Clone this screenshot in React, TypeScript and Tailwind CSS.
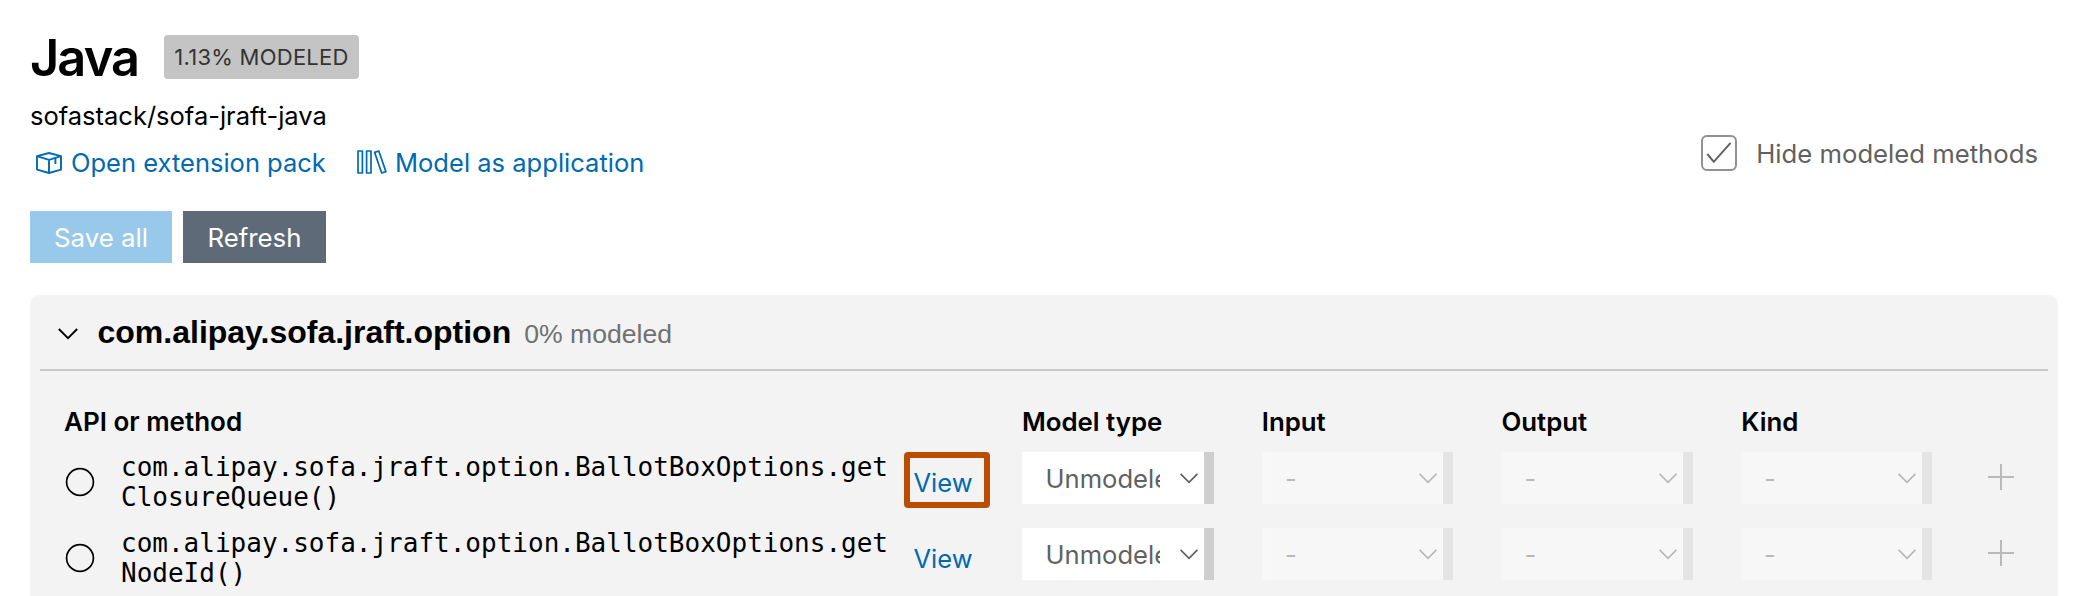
import React from "react";

const methods = [
  { name: ["com.alipay.sofa.jraft.option.BallotBoxOptions.get", "ClosureQueue()"], highlighted: true },
  { name: ["com.alipay.sofa.jraft.option.BallotBoxOptions.get", "NodeId()"], highlighted: false },
];

function ChevronDown({ className }: { className: string }) {
  return (
    <svg viewBox="0 0 18 11" fill="none" stroke="currentColor" className={className}>
      <path d="M0.6 0.9 L9 9.4 L17.4 0.9" strokeWidth="1.7" />
    </svg>
  );
}

function PackageIcon({ className }: { className: string }) {
  return (
    <svg viewBox="0 0 26 22" fill="none" stroke="currentColor" strokeWidth="1.9" strokeLinejoin="round" className={className}>
      <path d="M1 4.2 L13 1 L25 4.2 V17.6 L13 21 L1 17.6 Z" />
      <path d="M1 4.2 L13 7.8 L25 4.2 M13 7.8 V21" />
      <path d="M19.4 6.2 V12" />
    </svg>
  );
}

function LibraryIcon({ className }: { className: string }) {
  return (
    <svg viewBox="0 0 30 24" fill="none" stroke="currentColor" strokeWidth="1.7" strokeLinejoin="round" className={className}>
      <path d="M1 1 H5.4 V23 H1 Z" />
      <path d="M9.6 1 H14 V23 H9.6 Z" />
      <path d="M17.6 2.4 L21.8 1 L28.9 21.6 L24.7 23 Z" />
    </svg>
  );
}

function Dropdown({ value, disabled }: { value: string; disabled?: boolean }) {
  return (
    <div className={`flex h-[52px] w-[191.75px] shrink-0 items-center text-[#616161] ${disabled ? "opacity-40" : ""}`}>
      <div className="flex h-full min-w-0 flex-1 items-center bg-white pr-[6px] pl-[23.5px]">
        <span className="mt-[2px] w-[114.5px] overflow-hidden text-[25.6px] whitespace-nowrap">{value}</span>
        <ChevronDown className="ml-auto h-[11px] w-[18px] shrink-0" />
      </div>
      <div className="h-full w-[10px] shrink-0 bg-[#cecece]" />
    </div>
  );
}

function MethodRow({ name, highlighted }: { name: string[]; highlighted: boolean }) {
  return (
    <div className="flex h-[76px] items-start">
      <svg viewBox="0 0 30 30" className="mt-[15px] ml-[0.5px] h-[30px] w-[30px] shrink-0">
        <circle cx="15" cy="15" r="13.4" fill="none" stroke="#000" strokeWidth="1.7" />
      </svg>
      <div className="ml-[26.5px] w-[783px] shrink-0 font-['DejaVu_Sans_Mono',monospace] text-[26px] leading-[30px] text-black">
        {name.map((part) => (
          <div key={part}>{part}</div>
        ))}
      </div>
      <div
        className={`flex h-[56px] w-[86px] shrink-0 items-center rounded-[4px] border-[6px] pt-[6px] pl-[3.5px] text-[#006ab1] ${
          highlighted ? "border-[#bc4c00]" : "border-transparent"
        }`}
      >
        <span>View</span>
      </div>
      <div className="ml-[32px] flex gap-[47.75px]">
        <Dropdown value="Unmodeled" />
        <Dropdown value="-" disabled />
        <Dropdown value="-" disabled />
        <Dropdown value="-" disabled />
      </div>
      <svg viewBox="0 0 28 28" className="mt-[11px] ml-[55px] h-[28px] w-[28px] shrink-0">
        <path d="M14 1 V27 M1 14 H27" stroke="#b9b9b9" strokeWidth="2" />
      </svg>
    </div>
  );
}

export default function App() {
  return (
    <div className="h-[596px] w-[2088px] overflow-hidden bg-white px-[30px] font-['Inter',sans-serif] text-[25.5px] leading-[32px] text-black">
      <header className="flex h-[295px] justify-between">
        <div>
          <div className="flex items-center pt-[35px]">
            <h1 className="w-[134px] pt-[2px] text-[50.5px] leading-[42px] font-semibold tracking-[-1.9px]">Java</h1>
            <span className="flex h-[44px] w-[195px] items-center justify-center rounded-[4px] bg-[#c4c4c4] text-[22px] tracking-[0.25px] whitespace-nowrap text-[#333333]">
              1.13% MODELED
            </span>
          </div>
          <p className="mt-[21px] h-[32px]">sofastack/sofa-jraft-java</p>
          <nav className="mt-[15px] flex h-[32px] items-center text-[#006ab1]">
            <PackageIcon className="mr-[9px] ml-[6px] h-[22px] w-[26px]" />
            <span className="w-[256px] whitespace-nowrap">Open extension pack</span>
            <LibraryIcon className="mr-[8px] mb-[2px] ml-[30px] h-[24px] w-[30px]" />
            <span className="tracking-[0.02px]">Model as application</span>
          </nav>
          <div className="mt-[32px] flex gap-[11px] text-white">
            <button className="h-[52px] w-[142px] bg-[#99c9ea] pt-px text-[25.8px]">Save all</button>
            <button className="h-[52px] w-[143px] bg-[#5f6a79] pt-px text-[25.8px]">Refresh</button>
          </div>
        </div>
        <label className="mt-[135px] flex h-[36px] items-center pr-[20px] text-[#616161]">
          <span className="flex h-[36px] w-[36px] items-center justify-center rounded-[6px] border-2 border-[#919191]">
            <svg viewBox="0 0 26 22" fill="none" className="h-[22px] w-[26px]">
              <path d="M1.3 12 L7.8 19.8 L24.6 0.9" stroke="#616161" strokeWidth="2" />
            </svg>
          </span>
          <span className="ml-[19.5px] pt-px text-[25.7px]">Hide modeled methods</span>
        </label>
      </header>

      <section className="h-[320px] w-[2028px] rounded-[10px] bg-[#f3f3f3] px-[10px]">
        <div className="flex h-[76px] items-center border-b-2 border-[#c8c8c8] pl-[17.5px] font-['Liberation_Sans',sans-serif]">
          <ChevronDown className="mt-[3px] h-[12px] w-[20px]" />
          <h2 className="ml-[20px] text-[32px] font-bold">com.alipay.sofa.jraft.option</h2>
          <span className="mt-[3px] ml-[13px] text-[26.6px] text-[#717171]">0% modeled</span>
        </div>
        <div className="mt-[35px] flex h-[46px] pl-[24px] font-semibold">
          <div className="w-[958px] text-[26px]">API or method</div>
          <div className="w-[239.75px] text-[25.8px]">Model type</div>
          <div className="w-[239.75px] text-[25.8px]">Input</div>
          <div className="w-[239.75px] text-[25.8px]">Output</div>
          <div className="text-[25.8px]">Kind</div>
        </div>
        <div className="pl-[24px]">
          {methods.map((method) => (
            <MethodRow key={method.name[1]} {...method} />
          ))}
        </div>
      </section>
    </div>
  );
}
